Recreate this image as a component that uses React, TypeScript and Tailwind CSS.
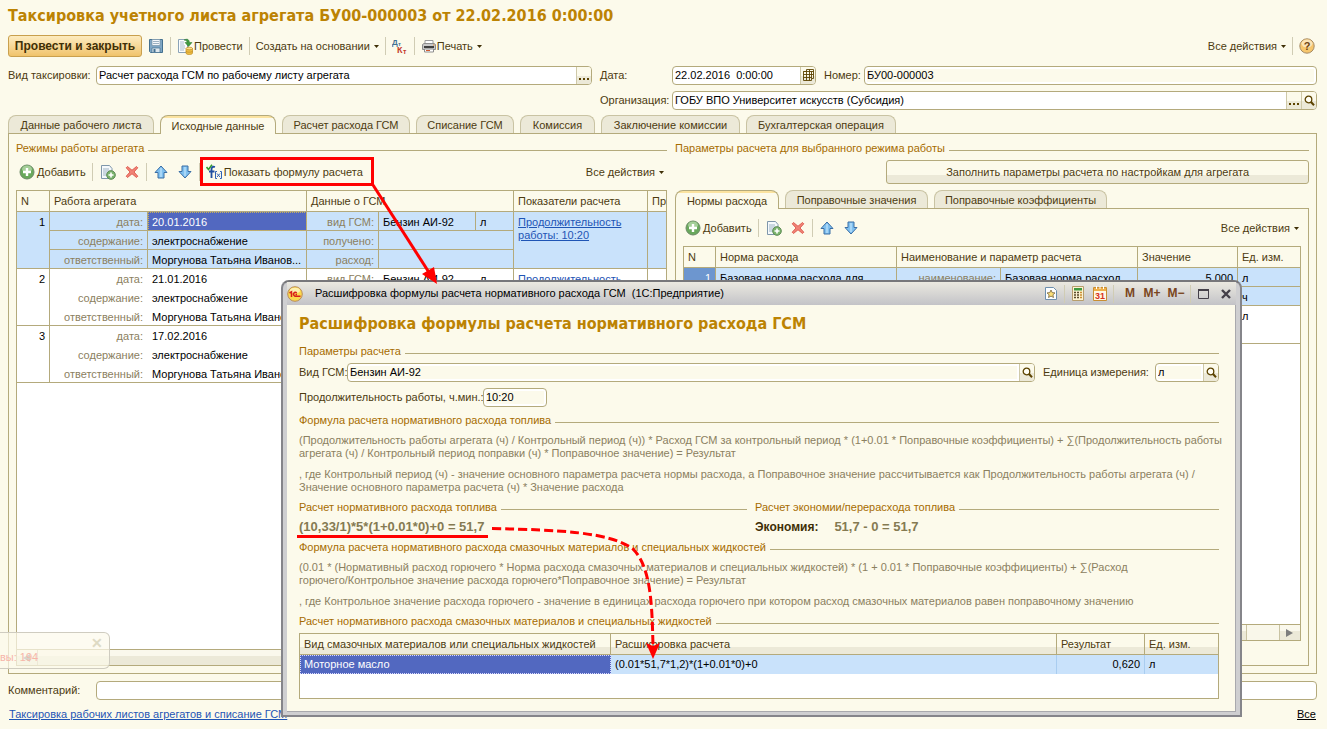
import React from 'react';
import { clsx } from 'clsx';

const FONT = "font-['Liberation_Sans','Noto_Sans',sans-serif]";
const TITLE_FONT = "font-['DejaVu_Sans_Condensed','DejaVu_Sans','Noto_Sans',sans-serif]";

export default function App() {
  return (
    <main className={clsx('relative flex min-h-screen w-full flex-col overflow-hidden bg-[#fcfaeb] px-2 pb-[7px] text-[11px] leading-[13px] text-[#4d3b10]', FONT)}>
      <h1 className={clsx('pt-1.5 text-[16px] font-bold leading-5 text-[#bc8303]', TITLE_FONT)}>
        Таксировка учетного листа агрегата БУ00-000003 от 22.02.2016 0:00:00
      </h1>

      {/* Command bar */}
      <div className="mt-[9px] flex h-[22px] items-center pr-1">
        <button className="h-[22px] w-[134px] whitespace-nowrap rounded-[3px] border border-[#c9a04e] bg-gradient-to-b from-[#fdecc0] to-[#f0c36b] text-[12px] font-bold text-[#3f2f06]">
          Провести и закрыть
        </button>
        <button aria-label="Записать" className="ml-1.5"><SaveIcon /></button>
        <Divider />
        <button className="flex items-center"><PostIcon />Провести</button>
        <Divider />
        <button className="flex items-center gap-1">Создать на основании <Caret /></button>
        <Divider />
        <button aria-label="Дебет и кредит"><DtKtIcon /></button>
        <Divider />
        <button className="flex items-center gap-1"><PrinterIcon /><span className="-ml-1">Печать</span> <Caret /></button>
        <button className="ml-auto flex items-center gap-1">Все действия <Caret /></button>
        <Divider />
        <button aria-label="Справка"><HelpIcon /></button>
      </div>

      {/* Document fields */}
      <div className="mr-0.5 mt-2 grid grid-cols-[584fr_717fr] gap-x-2 gap-y-[5px]">
        <Field id="kind" label="Вид таксировки:" labelClass="w-[88px]" value="Расчет расхода ГСМ по рабочему листу агрегата" buttons={['dots']} />
        <div className="flex gap-2">
          <Field id="date" label="Дата:" labelClass="w-[72px]" className="w-[216px]" value="22.02.2016  0:00:00" buttons={['grid']} />
          <Field id="number" label="Номер:" labelClass="w-10" className="flex-1" value="БУ00-000003" readOnly />
        </div>
        <div className="col-start-2">
          <Field id="org" label="Организация:" labelClass="w-[72px]" value="ГОБУ ВПО Университет искусств (Субсидия)" buttons={['dots', 'search']} />
        </div>
      </div>

      <div className="mt-[5px] flex gap-1.5" role="tablist">
        <Tab className="w-[146px]">Данные рабочего листа</Tab>
        <Tab className="w-[116px]" active>Исходные данные</Tab>
        <Tab className="w-[128px]">Расчет расхода ГСМ</Tab>
        <Tab className="w-[98px]">Списание ГСМ</Tab>
        <Tab className="w-[75px]">Комиссия</Tab>
        <Tab className="w-[139px]">Заключение комиссии</Tab>
        <Tab className="w-[150px]">Бухгалтерская операция</Tab>
      </div>

      <div className="mr-0.5 grid flex-1 grid-cols-[651fr_634fr] gap-2 border border-[#b4aa7c] px-[7px] pb-[7px] pt-[7px]">
        <section className="flex min-w-0 flex-col">
          <Legend>Режимы работы агрегата</Legend>
          <div className="mt-[5px] flex h-6 items-center pl-[3px] pr-[3px]">
            <ListTools />
            <Divider />
            <button className="flex items-center gap-px"><FormulaIcon />Показать формулу расчета</button>
            <button className="ml-auto flex items-center gap-1">Все действия <Caret /></button>
          </div>
          <ModesTable />
        </section>

        <section className="flex min-w-0 flex-col">
          <Legend>Параметры расчета для выбранного режима работы</Legend>
          <button className="ml-auto mt-[5px] h-6 w-2/3 rounded-[3px] border border-[#b4aa7c] bg-[linear-gradient(#fcfaeb_65%,#ece9d8_65%)] text-center">
            Заполнить параметры расчета по настройкам для агрегата
          </button>
          <div className="mt-1.5 flex gap-1.5" role="tablist">
            <Tab className="w-[104px]" active>Нормы расхода</Tab>
            <Tab className="w-[143px]">Поправочные значения</Tab>
            <Tab className="w-[173px]">Поправочные коэффициенты</Tab>
          </div>
          <div className="flex flex-1 flex-col border border-[#b4aa7c] px-[7px] pb-6 pt-[7px]">
            <div className="flex h-6 items-center pl-0.5 pr-0.5">
              <ListTools />
              <button className="ml-auto flex items-center gap-1">Все действия <Caret /></button>
            </div>
            <NormsTable />
          </div>
        </section>
      </div>

      <div className="mr-0.5 mt-1.5">
        <Field id="comment" label="Комментарий:" labelClass="w-[88px]" value="" />
      </div>
      <div className="mr-0.5 mt-1.5 flex h-4 items-center justify-between px-px">
        <a href="#reg" className="text-[#1f55b5] underline">Таксировка рабочих листов агрегатов и списание ГСМ</a>
        <a href="#all" className="text-black underline">Все</a>
      </div>

      {/* Fading notification */}
      <div className="absolute bottom-[60px] left-0 h-[37px] w-[110px] rounded-r-md border border-l-0 border-[#cfccc0] bg-[#fcfaeb]/70">
        <span className="absolute right-1.5 top-1 text-[14px] font-bold text-[#dedac4]">✕</span>
        <span className="absolute bottom-1 left-0 text-[#f6b5a8]">вы: 194</span>
      </div>

      <FormulaDialog />
      <Annotations />
    </main>
  );
}

function FormulaDialog() {
  return (
    <div role="dialog" aria-label="Расшифровка формулы" className="absolute left-[281px] top-[280px] w-[961px] rounded-t-lg border-2 border-[#85858a] border-t-[#77777a] bg-[#cfcfd1] px-1 pb-[3px]">
      <header className="flex h-[23px] items-center bg-gradient-to-b from-[#ebe9e0] to-[#c3c3c7] pr-1 text-black">
        <OneCIcon />
        <span className="ml-3">Расшифровка формулы расчета нормативного расхода ГСМ&nbsp; (1С:Предприятие)</span>
        <div className="ml-auto flex items-center">
          <button aria-label="Избранное"><StarIcon /></button>
          <Divider />
          <button aria-label="Калькулятор"><CalcIcon /></button>
          <button aria-label="Календарь" className="ml-2"><CalendarIcon /></button>
          <Divider />
          <button className="w-5 text-[12px] font-bold text-[#7a4520]">M</button>
          <button className="w-6 text-[12px] font-bold text-[#7a4520]">M+</button>
          <button className="-mr-1 w-6 text-[12px] font-bold text-[#7a4520]">M−</button>
          <Divider />
          <button aria-label="Развернуть">
            <svg width="13" height="12" viewBox="0 0 13 12"><path d="M1.5 2v8.500h10V2z" fill="none" stroke="#444049" /><path d="M1 2h11" stroke="#444049" strokeWidth="2" /></svg>
          </button>
          <button aria-label="Закрыть" className="ml-2.5">
            <svg width="12" height="12" viewBox="0 0 12 12"><path d="M2 2l8 8M10 2l-8 8" stroke="#444049" strokeWidth="2.400" /></svg>
          </button>
        </div>
      </header>

      <div className="border-b border-r border-[#a9a9ad] bg-[#fcfaeb] pb-3 pl-3 pr-4 pt-[9px]">
        <h2 className={clsx('text-[16px] font-bold leading-5 text-[#bc8303]', TITLE_FONT)}>
          Расшифровка формулы расчета нормативного расхода ГСМ
        </h2>
        <Legend className="mt-2.5">Параметры расчета</Legend>
        <div className="mt-1 flex gap-2">
          <Field id="fuel" label="Вид ГСМ:" labelClass="w-12" className="flex-1" value="Бензин АИ-92" readOnly buttons={['search']} />
          <Field id="unit" label="Единица измерения:" labelClass="w-28" className="w-[176px]" value="л" readOnly buttons={['search']} />
        </div>
        <Field id="duration" label="Продолжительность работы, ч.мин.:" labelClass="w-[184px]" className="mt-[5px] w-[248px]" value="10:20" readOnly />

        <Legend className="mt-1.5">Формула расчета нормативного расхода топлива</Legend>
        <p className="mt-[7px] whitespace-nowrap text-[#8b8060]">
          (Продолжительность работы агрегата (ч) / Контрольный период (ч)) * Расход ГСМ за контрольный период * (1+0.01 * Поправочные коэффициенты) + ∑(Продолжительность работы<br />
          агрегата (ч) / Контрольный период поправки (ч) * Поправочное значение) = Результат
        </p>
        <p className="mt-2 whitespace-nowrap text-[#8b8060]">
          , где Контрольный период (ч) - значение основного параметра расчета нормы расхода, а Поправочное значение рассчитывается как Продолжительность работы агрегата (ч) /<br />
          Значение основного параметра расчета (ч) * Значение расхода
        </p>

        <div className="mt-1.5 grid grid-cols-[448fr_464fr] gap-2">
          <Legend>Расчет нормативного расхода топлива</Legend>
          <Legend>Расчет экономии/перерасхода топлива</Legend>
        </div>
        <div className="mt-1.5 grid h-3.5 grid-cols-[448fr_464fr] items-center gap-2 font-bold leading-[14px] text-[#857a52]">
          <span className="text-[13px]">(10,33/1)*5*(1+0.01*0)+0 = 51,7</span>
          <span className="text-[13px]"><span className="mr-4 text-[12px] text-[#3f2f06]">Экономия:</span>51,7 - 0 = 51,7</span>
        </div>

        <Legend className="mt-1.5">Формула расчета нормативного расхода смазочных материалов и специальных жидкостей</Legend>
        <p className="mt-[7px] whitespace-nowrap text-[#8b8060]">
          (0.01 * (Нормативный расход горючего * Норма расхода смазочных материалов и специальных жидкостей) * (1 + 0.01 * Поправочные коэффициенты) + ∑(Расход<br />
          горючего/Контрольное значение расхода горючего*Поправочное значение) = Результат
        </p>
        <p className="mt-2 whitespace-nowrap text-[#8b8060]">
          , где Контрольное значение расхода горючего - значение в единицах расхода горючего при котором расход смазочных материалов равен поправочному значению
        </p>

        <Legend className="mt-1.5">Расчет нормативного расхода смазочных материалов и специальных жидкостей</Legend>
        <div className="mt-[5px] h-[66px] border border-[#b4aa7c] bg-white">
          <table className="w-full table-fixed border-separate border-spacing-0">
            <colgroup><col className="w-[311px]" /><col /><col className="w-[88px]" /><col className="w-[73px]" /></colgroup>
            <thead>
              <tr className="bg-[linear-gradient(#fcfaeb_60%,#ece9d8_60%)]">
                <Th>Вид смазочных материалов или специальных жидкостей</Th>
                <Th>Расшифровка расчета</Th>
                <Th>Результат</Th>
                <Th last>Ед. изм.</Th>
              </tr>
            </thead>
            <tbody>
              <tr className="h-[19px] bg-[#c9e2fb] text-black">
                <td className="border border-dotted border-[#d9d9ff] bg-[#5268c0] px-[3px] text-white">Моторное масло</td>
                <td className="border-r border-[#a9cdf0] px-1">(0.01*51,7*1,2)*(1+0.01*0)+0</td>
                <td className="border-r border-[#a9cdf0] px-1 text-right">0,620</td>
                <td className="px-1">л</td>
              </tr>
            </tbody>
          </table>
        </div>
      </div>
    </div>
  );
}

const MODES = [
  { n: 1, date: '20.01.2016', work: 'электроснабжение', person: 'Моргунова Татьяна Иванов...', selected: true },
  { n: 2, date: '21.01.2016', work: 'электроснабжение', person: 'Моргунова Татьяна Иванов...' },
  { n: 3, date: '17.02.2016', work: 'электроснабжение', person: 'Моргунова Татьяна Иванов...' },
];

function ModesTable() {
  return (
    <div className="mt-1.5 flex flex-1 flex-col border border-[#b4aa7c] bg-white">
      <table className="w-full table-fixed border-separate border-spacing-0">
        <colgroup>
          <col className="w-[33px]" /><col className="w-[98px]" /><col className="w-[159px]" /><col className="w-[72px]" />
          <col className="w-[97px]" /><col className="w-[38px]" /><col className="w-[134px]" /><col />
        </colgroup>
        <thead>
          <tr className="bg-[#fcfaeb]">
            <Th>N</Th>
            <Th colSpan={2}>Работа агрегата</Th>
            <Th colSpan={3}>Данные о ГСМ</Th>
            <Th>Показатели расчета</Th>
            <Th last>При</Th>
          </tr>
        </thead>
        {MODES.map((m) => {
          const s = !!m.selected;
          return (
            <tbody key={m.n} className={clsx('text-black', s && 'bg-[#c9e2fb]')}>
              <tr>
                <Td rowSpan={3} r b className="text-right">{m.n}</Td>
                <Td r={s} b={s} muted>дата:</Td>
                <Td r b={s} className={s ? 'bg-[#5268c0] text-white outline-1 -outline-offset-1 outline-dotted outline-[#c8b060]' : ''}>{m.date}</Td>
                <Td r={s} b={s} muted>вид ГСМ:</Td>
                <Td r={s} b={s}>Бензин АИ-92</Td>
                <Td r b={s}>л</Td>
                <Td rowSpan={3} r b>
                  <a href="#mode" className="text-[#1f55b5] underline">Продолжительность <br />работы: 10:20</a>
                </Td>
                <Td rowSpan={3} b />
              </tr>
              <tr>
                <Td r={s} b={s} muted>содержание:</Td>
                <Td r b={s}>{m.work}</Td>
                <Td r={s} b={s} muted>получено:</Td>
                <Td colSpan={2} r b={s} />
              </tr>
              <tr>
                <Td r={s} b muted>ответственный:</Td>
                <Td r b className="pr-0!">{m.person}</Td>
                <Td r={s} b muted>расход:</Td>
                <Td colSpan={2} r b />
              </tr>
            </tbody>
          );
        })}
      </table>
      <ScrollBar />
    </div>
  );
}

function NormsTable() {
  return (
    <div className="mt-1.5 flex flex-1 flex-col border border-[#b4aa7c] bg-white">
      <table className="w-full table-fixed border-separate border-spacing-0">
        <colgroup>
          <col className="w-8" /><col className="w-[181px]" /><col className="w-[104px]" /><col />
          <col className="w-[100px]" /><col className="w-[62px]" />
        </colgroup>
        <thead>
          <tr className="bg-[#fcfaeb]">
            <Th>N</Th>
            <Th>Норма расхода</Th>
            <Th colSpan={2}>Наименование и параметр расчета</Th>
            <Th>Значение</Th>
            <Th last>Ед. изм.</Th>
          </tr>
        </thead>
        <tbody className="bg-[#c9e2fb] text-black">
          <tr>
            <Td rowSpan={2} r b className="bg-[#6d96cf] text-right text-white">1</Td>
            <Td rowSpan={2} r b>Базовая норма расхода для</Td>
            <Td r b muted>наименование:</Td>
            <Td r b>Базовая норма расход</Td>
            <Td r b className="text-right">5,000</Td>
            <Td b>л</Td>
          </tr>
          <tr>
            <Td r b muted>параметр:</Td>
            <Td r b />
            <Td r b />
            <Td b>ч</Td>
          </tr>
        </tbody>
        <tbody className="text-black">
          <tr>
            <Td rowSpan={2} r b className="text-right">2</Td>
            <Td rowSpan={2} r b />
            <Td muted>наименование:</Td>
            <Td r />
            <Td r />
            <Td>л</Td>
          </tr>
          <tr>
            <Td b muted>параметр:</Td>
            <Td r b />
            <Td r b />
            <Td b />
          </tr>
        </tbody>
      </table>
      <ScrollBar />
    </div>
  );
}

function ScrollBar() {
  return (
    <div className="mt-auto flex h-4 border-t border-[#b4aa7c] bg-[#f9f7ea]">
      <button aria-label="Влево" className="flex w-[21px] items-center justify-center border-r border-[#c9c3a3] bg-[linear-gradient(#faf8ec_40%,#ece9d8_40%)]">
        <svg width="8" height="8" viewBox="0 0 8 8"><path d="M7 0v8L0 4z" fill="#7d7d7d" /></svg>
      </button>
      <div className="w-[88%] border-r border-[#c9c3a3] bg-[linear-gradient(#faf8ec_40%,#ece9d8_40%)]" />
      <div className="flex-1" />
      <button aria-label="Вправо" className="flex w-[21px] items-center justify-center border-l border-[#c9c3a3] bg-[linear-gradient(#faf8ec_40%,#ece9d8_40%)]">
        <svg width="8" height="8" viewBox="0 0 8 8"><path d="M0 0v8l7-4z" fill="#7d7d7d" /></svg>
      </button>
    </div>
  );
}

function Th({ children, colSpan, last }: { children: React.ReactNode, colSpan?: number, last?: boolean }) {
  return (
    <th colSpan={colSpan} className={clsx('h-[21px] overflow-hidden whitespace-nowrap border-b border-[#b4aa7c] px-1 py-0 text-left font-normal', !last && 'border-r')}>
      {children}
    </th>
  );
}

type TdProps = { children?: React.ReactNode, rowSpan?: number, colSpan?: number, r?: boolean, b?: boolean, muted?: boolean, className?: string };

function Td({ children, rowSpan, colSpan, r, b, muted, className }: TdProps) {
  return (
    <td
      rowSpan={rowSpan}
      colSpan={colSpan}
      className={clsx(
        'h-[19px] truncate border-[#b4aa7c] pb-0 pl-1',
        r ? 'border-r pr-1' : 'pr-[5px]',
        rowSpan ? 'pt-1 align-top' : 'pt-0.5',
        b && 'border-b',
        muted && 'text-right text-[#8b8060]',
        className
      )}
    >
      {children}
    </td>
  );
}

type FieldButton = 'dots' | 'search' | 'grid';
type FieldProps = { id: string, label: string, value: string, labelClass: string, className?: string, readOnly?: boolean, buttons?: FieldButton[] };

function Field({ id, label, value, labelClass, className, readOnly, buttons = [] }: FieldProps) {
  return (
    <div className={clsx('flex h-5 min-w-0 items-center', className)}>
      <label htmlFor={id} className={clsx('shrink-0 whitespace-nowrap', labelClass)}>{label}</label>
      <div className="flex h-[19px] min-w-0 flex-1 overflow-hidden rounded-[4px] border border-[#b4aa7c] bg-white">
        <input id={id} defaultValue={value} readOnly={readOnly} className={clsx('min-w-0 flex-1 text-black outline-none', readOnly ? 'm-0.5 bg-[#fcfaeb]' : 'px-0.5')} />
        {buttons.map((b) => (
          <button key={b} aria-label={b} className="flex w-[15px] items-center justify-center border-l border-[#cfc9a8] bg-[linear-gradient(#fcfaeb_55%,#ece9d8_55%)]">
            {b === 'dots' && <svg width="11" height="10" viewBox="0 0 11 10"><path d="M0 8h2v2H0zM4 8h2v2H4zM8 8h2v2H8z" fill="#5c4300" /></svg>}
            {b === 'search' && <svg width="11" height="11" viewBox="0 0 11 11"><circle cx="4.500" cy="4.500" r="3.300" fill="#fffef5" stroke="#5c4300" strokeWidth="1.300" /><path d="M7 7l3 3.200" stroke="#5c4300" strokeWidth="2" /></svg>}
            {b === 'grid' && <svg width="11" height="12" viewBox="0 0 11 12"><path d="M3.500.5h7v9h-2v2h-8v-9h3zM.5 5.500h10M.5 8.500h8M3.500 2.500v9M6.500 .5v11M.5 2.500h10M8.500 2.500v7" fill="none" stroke="#5c4300" strokeWidth=".9" /></svg>}
          </button>
        ))}
      </div>
    </div>
  );
}

function Legend({ children, className }: { children: React.ReactNode, className?: string }) {
  return (
    <div className={clsx('flex h-3.5 items-center gap-1 text-[#a66c00]', className)}>
      <h3 className="whitespace-nowrap">{children}</h3>
      <div className="mt-1 h-px flex-1 bg-[#b4aa7c]" />
    </div>
  );
}

function Tab({ children, className, active }: { children: React.ReactNode, className: string, active?: boolean }) {
  return (
    <button
      role="tab"
      aria-selected={!!active}
      className={clsx(
        'whitespace-nowrap rounded-t-lg border border-b-0 pt-0.5 text-center',
        active ? 'relative z-10 -mb-px h-[19px] border-[#b4aa7c] bg-[linear-gradient(#fbe3a0_2px,#fcfaeb_2px)]' : 'h-[18px] border-[#c9c3a3] bg-[#ece9d8]',
        className
      )}
    >
      {children}
    </button>
  );
}

function ListTools() {
  return (
    <>
      <button className="flex items-center gap-0.5"><AddIcon />Добавить</button>
      <Divider />
      <button aria-label="Скопировать" className="ml-px"><CopyIcon /></button>
      <button aria-label="Удалить" className="ml-2"><DeleteIcon /></button>
      <Divider />
      <button aria-label="Вверх"><ArrowIcon /></button>
      <button aria-label="Вниз" className="ml-2"><ArrowIcon down /></button>
    </>
  );
}

function Divider() {
  return <div className="mx-1.5 h-[18px] w-px bg-[#d0ccb4]" />;
}

function Caret() {
  return <svg width="5" height="3" viewBox="0 0 5 3"><path d="M0 0h5L2.500 3z" fill="#3f2f06" /></svg>;
}

function SaveIcon() {
  return (
    <svg width="16" height="16" viewBox="0 0 16 16">
      <path d="M1.500 1.500h13v13h-12l-1-1z" fill="#7fa6c4" stroke="#44708f" />
      <path d="M4 1.500h8v6H4z" fill="#f4f8fb" stroke="#7793a8" strokeWidth=".7" />
      <path d="M5 3.500h6M5 5.500h6" stroke="#9db2c2" />
      <path d="M4 10h8v4.500H4z" fill="#dfe8ee" stroke="#44708f" strokeWidth=".7" />
      <path d="M5.500 11h2v3h-2z" fill="#44708f" />
    </svg>
  );
}

function PostIcon() {
  return (
    <svg width="17" height="17" viewBox="0 0 17 17">
      <path d="M1.500 1.500h9v13h-9z" fill="#fbfdfe" stroke="#8ba3b8" />
      <path d="M3 4h4M3 6h4M3 8h5M3 10h5M3 12h4" stroke="#a9bccb" />
      <path d="M7 2c3-1.500 5-1 5.500 2.500H15L11.500 8.500 8 4.500h2C10 3 9 2.300 7 2z" fill="#3f9a3f" stroke="#287528" strokeWidth=".5" />
      <path d="M9 10.500v4.500c0 2 6.500 2 6.500 0v-4.500z" fill="#efbf45" stroke="#bf8a1f" strokeWidth=".7" />
      <ellipse cx="12.250" cy="10.500" rx="3.250" ry="1.300" fill="#fbe18b" stroke="#bf8a1f" strokeWidth=".7" />
      <path d="M9 13c0 1.600 6.500 1.600 6.500 0" fill="none" stroke="#bf8a1f" strokeWidth=".7" />
    </svg>
  );
}

function DtKtIcon() {
  return (
    <svg width="16" height="16" viewBox="0 0 16 16" className="font-['Liberation_Sans',sans-serif]" fontWeight="bold">
      <text x="0" y="7" fontSize="8" fill="#3f7193">Д</text>
      <text x="6" y="8" fontSize="6" fill="#3f7193">т</text>
      <text x="5" y="15" fontSize="9" fill="#c43b2b">К</text>
      <text x="11" y="16" fontSize="7" fill="#c43b2b">т</text>
    </svg>
  );
}

function PrinterIcon() {
  return (
    <svg width="16" height="16" viewBox="0 0 16 16">
      <path d="M4 2.500h8v5H4z" fill="#fff" stroke="#9a9a9a" />
      <path d="M1.500 6.500l1.500-1h10l1.500 1v5h-13z" fill="#c9c9c9" stroke="#8d8d8d" />
      <path d="M3 8h10v2H3z" fill="#3f3f3f" />
      <path d="M3.500 11h9v3h-9z" fill="#fff" stroke="#8d8d8d" />
      <path d="M5 12.500h4" stroke="#d0592e" />
      <path d="M12 7h1.500" stroke="#e08f38" />
    </svg>
  );
}

function HelpIcon() {
  return (
    <svg width="16" height="16" viewBox="0 0 16 16" className="font-['Liberation_Sans',sans-serif]">
      <circle cx="8" cy="8" r="7.200" fill="#f6c66d" stroke="#a58a64" />
      <ellipse cx="8" cy="5.500" rx="5.500" ry="4" fill="#fbe3b6" />
      <text x="8" y="12" fontSize="11" fontWeight="bold" textAnchor="middle" fill="#6d4413">?</text>
    </svg>
  );
}

function AddIcon() {
  return (
    <svg width="16" height="16" viewBox="0 0 16 16">
      <circle cx="8" cy="8" r="7" fill="#69a85c" stroke="#6d8a68" />
      <ellipse cx="8" cy="5" rx="5" ry="3.500" fill="#a5cf99" />
      <path d="M8 4v8M4 8h8" stroke="#fff" strokeWidth="2.400" />
    </svg>
  );
}

function CopyIcon() {
  return (
    <svg width="16" height="16" viewBox="0 0 16 16">
      <path d="M1.500 1.500h8l2.500 3v10H1.500z" fill="#f5f9fc" stroke="#7f97ab" />
      <path d="M3 5h6M3 7h7M3 9h5M3 11h4" stroke="#9fb4c4" />
      <circle cx="11" cy="11" r="4.300" fill="#7bb46d" stroke="#5c8a53" />
      <path d="M11 8.500v5M8.500 11h5" stroke="#fff" strokeWidth="1.600" />
    </svg>
  );
}

function DeleteIcon() {
  return (
    <svg width="16" height="16" viewBox="0 0 16 16">
      <path d="M3.500 2.500L8 6.200l4.500-3.700 1.300 1.300L10 8l3.800 4.200-1.300 1.300L8 9.800l-4.500 3.700-1.300-1.300L6 8 2.200 3.800z" fill="#f08376" stroke="#d9483c" strokeWidth=".8" />
    </svg>
  );
}

function ArrowIcon({ down }: { down?: boolean }) {
  return (
    <svg width="16" height="16" viewBox="0 0 16 16" className={down ? 'rotate-180' : ''}>
      <path d="M8 2l6 6.500h-3V14H5V8.500H2z" fill="#7fc0f0" stroke="#3a6ea5" strokeLinejoin="round" />
      <path d="M8 4v9" stroke="#b5defa" strokeWidth="1.500" />
    </svg>
  );
}

function FormulaIcon() {
  return (
    <svg width="17" height="16" viewBox="0 0 17 16">
      <path d="M.5 3l2 2.500L6 .8" fill="none" stroke="#2f9a2f" strokeWidth="1.600" />
      <path d="M9 3C6.500 2.200 5.500 3.500 5.500 5.500V14M3 7.500h5.500" fill="none" stroke="#1f4fa0" strokeWidth="1.800" />
      <path d="M11 7.500H9.500v7H11M14 7.500h1.500v7H14M11 9.500l3 3.500M14 9.500L11 13" fill="none" stroke="#2f62b5" />
    </svg>
  );
}

function OneCIcon() {
  return (
    <svg width="16" height="16" viewBox="0 0 16 16">
      <circle cx="8" cy="8" r="7.300" fill="#fbd84c" stroke="#b98c5a" />
      <ellipse cx="8" cy="4.500" rx="5" ry="2.700" fill="#fdf0ae" />
      <path d="M2.500 7L4.500 5.800V11M9.800 6.800C7.500 5 5.300 8.200 7.500 9.800C8 10.200 8.500 10.200 9 10.200H13.500M10 8.400H8.500" fill="none" stroke="#d8201c" strokeWidth="1.500" />
    </svg>
  );
}

function StarIcon() {
  return (
    <svg width="14" height="15" viewBox="0 0 14 15">
      <path d="M1.500 1.500h8l3 3v9h-11z" fill="#fdfefe" stroke="#6d8fae" />
      <path d="M7 4l1.200 2.600 2.800.3-2.100 1.900.6 2.700L7 10.100l-2.500 1.400.6-2.700L3 6.900l2.800-.3z" fill="#fbe07a" stroke="#77633a" strokeWidth=".8" />
    </svg>
  );
}

function CalcIcon() {
  return (
    <svg width="14" height="15" viewBox="0 0 14 15">
      <path d="M1.500.5h11v14h-11z" fill="#fdf3d2" stroke="#b79d6c" />
      <path d="M3 2h8v2.500H3z" fill="#3f9a3f" />
      <path d="M3 6.500h2M6 6.500h2M3 9h2M6 9h2M3 11.500h2M6 11.500h2" stroke="#5a4a2a" strokeWidth="1.500" />
      <path d="M9 6.500h2M9 9h2M9 11.500h2" stroke="#c98e33" strokeWidth="1.500" />
    </svg>
  );
}

function CalendarIcon() {
  return (
    <svg width="14" height="15" viewBox="0 0 14 15" className="font-['Liberation_Sans',sans-serif]">
      <path d="M.5 1.500h13v13H.5z" fill="#fff8e4" stroke="#c98e33" />
      <path d="M1 2h12v3H1z" fill="#efb04a" />
      <path d="M3.500 0v3M7 0v3M10.500 0v3" stroke="#fff" />
      <text x="7" y="13" fontSize="9" fontWeight="bold" textAnchor="middle" fill="#d8301c">31</text>
    </svg>
  );
}

// Red marks drawn over the form and the dialog
function Annotations() {
  return (
    <svg className="pointer-events-none absolute left-0 top-0" width="1327" height="729" viewBox="0 0 1327 729" fill="none" stroke="#ff0000" strokeWidth="3">
      <rect x="201.500" y="158.500" width="171" height="26" />
      <path d="M373 185L430 274" />
      <path d="M437 284L422 274L434 267z" fill="#ff0000" stroke="none" />
      <path d="M297 536.500H488" />
      <path d="M492 528.500C560 530 610 532 633 549C652 568 652 610 653 646" strokeDasharray="9 4" />
      <path d="M646 643L653 646L660 643L653 659z" fill="#ff0000" stroke="none" />
    </svg>
  );
}
